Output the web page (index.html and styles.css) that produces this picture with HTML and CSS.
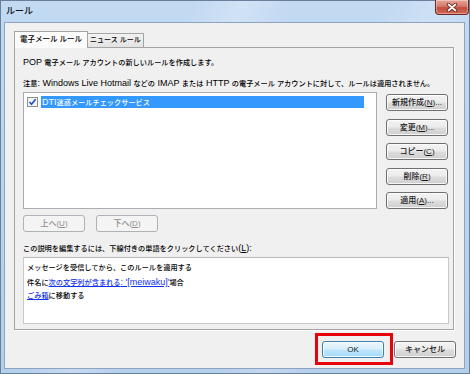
FILE: index.html
```html
<!DOCTYPE html>
<html lang="ja">
<head>
<meta charset="utf-8">
<title>ルール</title>
<link rel="stylesheet" href="styles.css">
</head>
<body>
<div class="window">
  <div class="titlebar">
    <span class="title">ルール</span>
    <div class="close">
      <svg width="12" height="9" viewBox="0 0 12 9"><path d="M2.5 1.5 L9.5 7.5 M9.5 1.5 L2.5 7.5" stroke="#5a1d16" stroke-width="3.4" stroke-linecap="round"/><path d="M2.5 1.5 L9.5 7.5 M9.5 1.5 L2.5 7.5" stroke="#fff" stroke-width="1.8" stroke-linecap="round"/></svg>
    </div>
  </div>
  <div class="client">
    <div class="tabs">
      <div class="tab active">電子メール ルール</div>
      <div class="tab">ニュース ルール</div>
    </div>
    <div class="panel">
      <p class="intro"><span class="lat">POP </span>電子メール アカウントの新しいルールを作成します。</p>
      <p class="note">注意<span class="lat">: Windows Live Hotmail </span>などの<span class="lat"> IMAP </span>または<span class="lat"> HTTP </span>の電子メール アカウントに対して、ルールは適用されません。</p>
      <div class="rules-row">
        <div class="listbox">
          <div class="item">
            <span class="check"><svg width="11" height="10" viewBox="0 0 11 10"><rect x="0.5" y="0.5" width="10" height="9" fill="#f4f4f4" stroke="#8e8f8f"/><path d="M2.5 5 L4.5 7.3 L8.6 2.2" fill="none" stroke="#1e55b8" stroke-width="1.6"/></svg></span>
            <span class="item-label"><span class="lat">DTI</span>迷惑メールチェックサービス</span>
          </div>
        </div>
        <div class="side-buttons">
          <button class="btn">新規作成(<u>N</u>)...</button>
          <button class="btn">変更(<u>M</u>)...</button>
          <button class="btn">コピー(<u>C</u>)</button>
          <button class="btn">削除(<u>R</u>)</button>
          <button class="btn">適用(<u>A</u>)...</button>
        </div>
      </div>
      <div class="move-row">
        <button class="btn" disabled>上へ(<u>U</u>)</button>
        <button class="btn" disabled>下へ(<u>D</u>)</button>
      </div>
      <p class="desc-label">この説明を編集するには、下線付きの単語をクリックしてください<span class="lat">(<u>L</u>):</span></p>
      <div class="desc">
        <div class="line">メッセージを受信してから、このルールを適用する</div>
        <div class="line">件名に<a class="link">次の文字列が含まれる<span class="lat">: '[meiwaku]'</span></a>場合</div>
        <div class="line"><a class="link">ごみ箱</a>に移動する</div>
      </div>
    </div>
    <div class="footer">
      <span class="highlight"><button class="btn default">OK</button></span>
      <button class="btn">キャンセル</button>
    </div>
  </div>
</div>
</body>
</html>
```
FILE: styles.css
```css
* { box-sizing: border-box; }
html, body { margin: 0; padding: 0; }
body {
  width: 470px;
  height: 374px;
  overflow: hidden;
  font-family: "Liberation Sans", "Noto Sans CJK JP", sans-serif;
  font-size: 7.2px;
  font-weight: 500;
  color: #000;
}
.lat { font-size: 9px; font-weight: 400; }
.window {
  width: 470px;
  height: 374px;
  border: 1px solid #6a7f9b;
  background:
    linear-gradient(115deg, rgba(255,255,255,0) 30%, rgba(255,255,255,0.25) 38%, rgba(255,255,255,0) 46%, rgba(255,255,255,0) 60%, rgba(255,255,255,0.2) 68%, rgba(255,255,255,0) 76%),
    linear-gradient(180deg, #c2d9f2 0%, #b4cfec 100%);
  padding: 0 4px 4px 3px;
  display: flex;
  flex-direction: column;
}
.titlebar {
  height: 21px;
  display: flex;
  justify-content: space-between;
  align-items: flex-start;
}
.title {
  font-size: 9px;
  color: #111;
  padding: 4px 0 0 2px;
  line-height: 12px;
}
.close {
  width: 34px;
  height: 15px;
  margin: -1px -4px 0 0;
  border: 1px solid #6e2a22;
  border-top: none;
  border-radius: 0 0 4px 4px;
  background: linear-gradient(180deg, #e8a497 0%, #d47a6b 45%, #c24d3c 55%, #d26a55 100%);
  box-shadow: inset 0 0 0 1px rgba(255,255,255,0.35);
  display: flex;
  align-items: center;
  justify-content: center;
}
.client {
  flex: 1;
  border: 1px solid #8ea3bf;
  background: #f0f0f0;
  padding: 8px 10px 0 9px;
  display: flex;
  flex-direction: column;
}
.tabs {
  height: 16px;
  display: flex;
  align-items: flex-end;
  position: relative;
  z-index: 1;
}
.tab {
  height: 14px;
  line-height: 12px;
  padding: 0 2px;
  border: 1px solid #a4a4a4;
  border-bottom: none;
  background: linear-gradient(180deg, #f2f2f2 0%, #e3e3e3 100%);
  margin-left: -1px;
  white-space: nowrap;
  font-size: 7px;
}
.tab.active {
  height: 17px;
  margin-left: 0;
  margin-bottom: -1px;
  padding: 2px 5px 0;
  background: #fbfbfb;
  font-size: 7.5px;
}
.panel {
  height: 283px;
  border: 1px solid #a4a4a4;
  box-shadow: 1px 1px 0 #ffffff;
  background: #f0f0f0;
  padding: 8px 0 0 8px;
}
.intro, .note, .desc-label {
  margin: 0;
  line-height: 12px;
  height: 12px;
  white-space: nowrap;
}
.note { margin-top: 9px; }
.rules-row {
  display: flex;
  margin-top: 3px;
  gap: 9px;
}
.listbox {
  width: 354px;
  height: 117px;
  background: #fff;
  border: 1px solid #abadb3;
  padding: 3px 0 0 3px;
}
.item {
  display: flex;
  align-items: center;
  height: 12px;
}
.check {
  width: 11px;
  height: 10px;
  display: flex;
  margin-right: 3px;
}
.item-label {
  width: 323px;
  height: 12px;
  line-height: 12px;
  background: #3399ff;
  color: #fff;
  padding-left: 1px;
  white-space: nowrap;
}
.side-buttons {
  display: flex;
  flex-direction: column;
  gap: 7.5px;
  margin-top: 2px;
}
.btn {
  font: inherit;
  font-size: 8px;
  width: 62px;
  height: 17px;
  padding: 0;
  border: 1px solid #707070;
  border-radius: 3px;
  background: linear-gradient(180deg, #f3f3f3 0%, #ebebeb 48%, #dddddd 52%, #cfcfcf 100%);
  box-shadow: inset 0 0 0 1px rgba(255,255,255,0.8);
  color: #1a1a1a;
  line-height: 15px;
  white-space: nowrap;
}
.btn:disabled {
  border-color: #adb2b5;
  background: #f4f4f4;
  box-shadow: none;
  color: #8d8d8d;
}
.move-row {
  display: flex;
  gap: 11px;
  margin-top: 6px;
}
.desc-label { margin-top: 10px; }
.desc {
  width: 426px;
  height: 67px;
  margin-top: 3px;
  background: #fff;
  border: 1px solid #c8c8c8;
  border-top-color: #b9b9b9;
  padding: 3px 0 0 3px;
}
.line {
  line-height: 14px;
  height: 14px;
  white-space: nowrap;
}
.link {
  color: #1133ee;
  text-decoration: underline;
}
.footer {
  display: flex;
  justify-content: flex-end;
  gap: 10px;
  margin-top: 11px;
  margin-right: -2px;
}
.highlight {
  position: relative;
  display: flex;
}
.highlight::after {
  content: "";
  position: absolute;
  top: -8px;
  left: -7px;
  right: -9px;
  bottom: -7px;
  border: 3px solid #e8000b;
}
.btn.default {
  border-color: #3c7fb1;
  background: linear-gradient(180deg, #eaf6fd 0%, #d9f0fc 48%, #bee6fd 52%, #a7d9f5 100%);
}
```
